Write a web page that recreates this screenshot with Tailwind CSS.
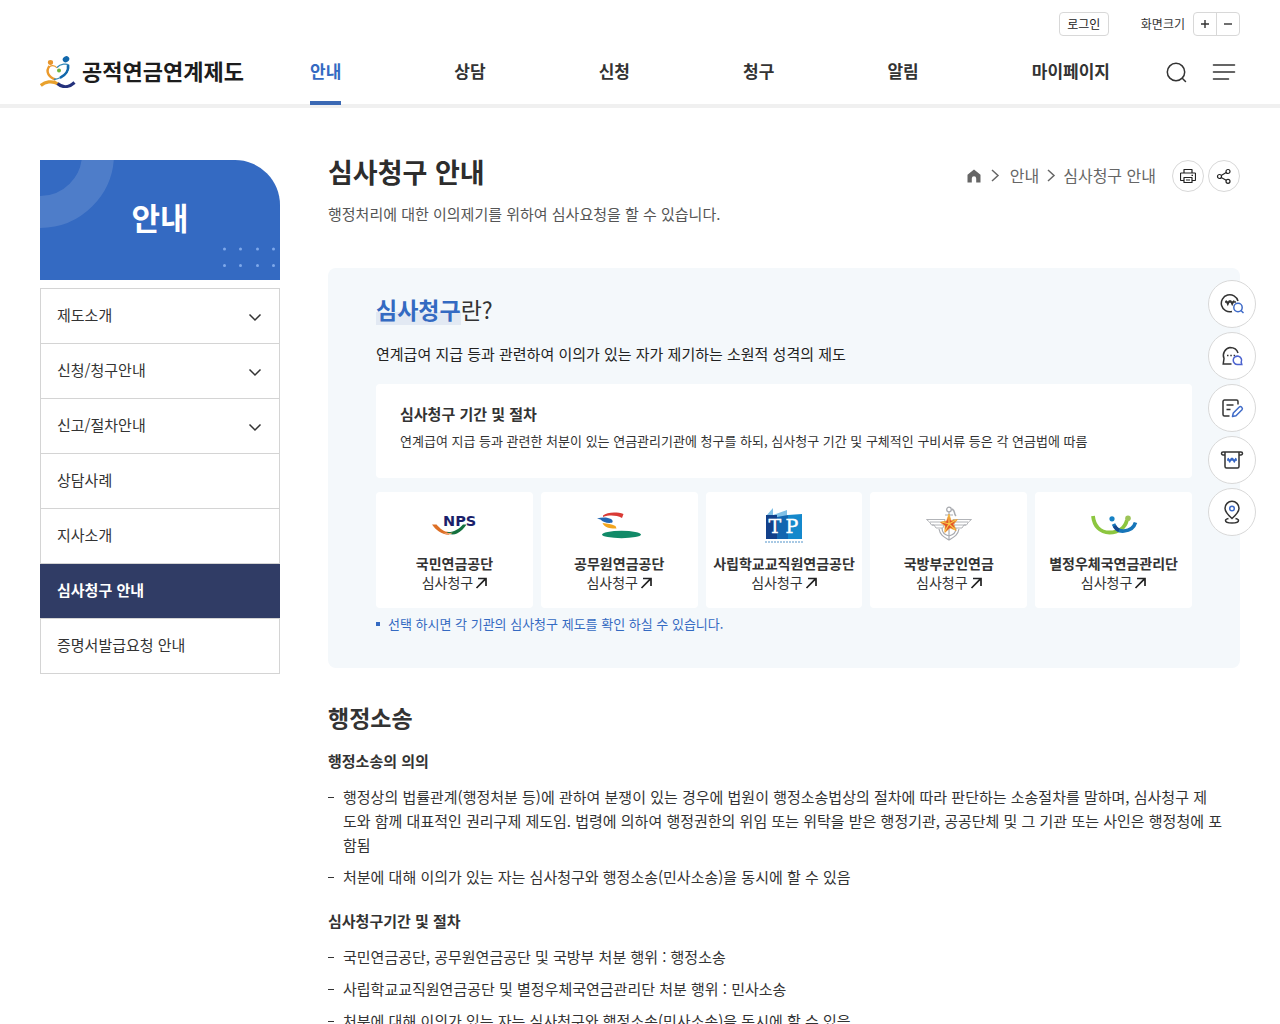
<!DOCTYPE html>
<html lang="ko">
<head>
    <meta charset="UTF-8">
    <meta name="viewport" content="width=device-width, initial-scale=1.0">
    <title>심사청구 안내 | 공적연금연계제도</title>
    <script src="https://cdn.jsdelivr.net/npm/@tailwindcss/browser@4"></script>
</head>
<body class="bg-white text-[#333] text-[15px] leading-6 font-['Noto_Sans_CJK_KR',sans-serif]">

    <!-- Header -->
    <header class="border-b-4 border-[#f0f0f0] px-10">
        <div class="flex justify-end items-center pt-3 text-xs">
            <button class="h-6 w-[50px] border border-[#d8d8d8] rounded text-[#222]">로그인</button>
            <span class="ml-8">화면크기</span>
            <div class="ml-2 flex h-6 w-[47px] border border-[#d8d8d8] rounded">
                <button aria-label="확대" class="flex-1 flex items-center justify-center border-r border-[#d8d8d8]">
                    <svg class="w-2 h-2" viewBox="0 0 8 8" stroke="#333" stroke-width="1.4"><path d="M0 4h8M4 0v8"/></svg>
                </button>
                <button aria-label="축소" class="flex-1 flex items-center justify-center">
                    <svg class="w-2 h-2" viewBox="0 0 8 8" stroke="#333" stroke-width="1.4"><path d="M0 4h8"/></svg>
                </button>
            </div>
        </div>
        <div class="flex h-17 items-stretch">
            <a href="#" class="flex items-center w-[270px] gap-1.5">
                <svg class="w-9 h-8 mt-1" viewBox="0 0 36 32" fill="none">
                    <ellipse cx="10.5" cy="6.5" rx="2.6" ry="2.4" fill="#e8952b"/>
                    <ellipse cx="26" cy="3.2" rx="3.4" ry="2.9" fill="#1268ac" transform="rotate(-30 26 3.2)"/>
                    <path d="M9.500 10C5.500 15 8 21 15.500 23.500" stroke="#eb9a2c" stroke-width="2.400"/>
                    <path d="M9 11c3-2 6-1.500 8 1" stroke="#eb9a2c" stroke-width="1.200"/>
                    <path d="M17 11.500c3.500-4 10-4 11.500-2.500 1 6-4 13-14.500 14.500" stroke="#3187b8" stroke-width="1.300"/>
                    <path d="M28 9c.8 5-2.200 10-8 12.800" stroke="#1268ac" stroke-width="2.600"/>
                    <circle cx="19" cy="14.500" r="2" fill="#6cb33f"/>
                    <path d="M.8 29.500C5 26 12 24 18 28" stroke="#e9a12c" stroke-width="3.200"/>
                    <path d="M17.500 27.500c5 4.500 11.500 4 17-1" stroke="#24317c" stroke-width="3.200"/>
                </svg>
                <span class="text-[22px] font-bold text-[#1c1c1c] whitespace-nowrap">공적연금연계제도</span>
            </a>
            <nav class="flex-1 flex justify-between text-[17px] font-bold">
                <a href="#" class="relative flex items-center pt-0.5 text-[#346ac2]">안내<span class="absolute inset-x-0 -bottom-px h-1 bg-[#3b69b4]"></span></a>
                <a href="#" class="flex items-center pt-0.5">상담</a>
                <a href="#" class="flex items-center pt-0.5">신청</a>
                <a href="#" class="flex items-center pt-0.5">청구</a>
                <a href="#" class="flex items-center pt-0.5">알림</a>
                <a href="#" class="flex items-center pt-0.5">마이페이지</a>
            </nav>
            <div class="flex items-center justify-end gap-6 w-[130px] pr-1 pt-1">
                <button aria-label="검색">
                    <svg class="w-6 h-6" viewBox="0 0 24 24" fill="none" stroke="#333" stroke-width="1.500" stroke-linecap="round"><circle cx="12" cy="12" r="8.700"/><path d="M18.500 18.500l3 3"/></svg>
                </button>
                <button aria-label="전체메뉴">
                    <svg class="w-6 h-6" viewBox="0 0 24 24" fill="none" stroke="#333" stroke-width="1.600" stroke-linecap="round"><path d="M1.500 5h21M1.500 12h21M1.500 19h15"/></svg>
                </button>
            </div>
        </div>
    </header>

    <div class="flex items-start gap-12 px-10 pt-[52px]">

        <!-- Side menu -->
        <aside class="w-60 shrink-0">
            <div class="relative h-30 bg-[#346ac2] rounded-tr-[45px] overflow-hidden flex items-center justify-center pb-1.5">
                <svg class="absolute inset-0 w-60 h-30" viewBox="0 0 240 120" fill="none">
                    <circle cx="0" cy="-6" r="58" stroke="#fff" stroke-opacity=".13" stroke-width="32"/>
                    <g fill="#7fa9ea">
                        <circle cx="184.500" cy="89" r="1.500"/><circle cx="200.500" cy="89" r="1.500"/><circle cx="217.500" cy="89" r="1.500"/><circle cx="233.500" cy="89" r="1.500"/>
                        <circle cx="184.500" cy="105.500" r="1.500"/><circle cx="200.500" cy="105.500" r="1.500"/><circle cx="217.500" cy="105.500" r="1.500"/><circle cx="233.500" cy="105.500" r="1.500"/>
                    </g>
                </svg>
                <h2 class="relative text-[31px] font-bold text-white">안내</h2>
            </div>
            <ul class="mt-2 border border-[#d4d4d4] divide-y divide-[#d4d4d4]">
                <li><a href="#" class="flex items-center justify-between h-[54px] px-4 pb-[3px]">제도소개
                    <svg class="w-4 h-4 mt-1" viewBox="0 0 16 16" fill="none" stroke="#333" stroke-width="1.500"><path d="M2.500 5.500L8 11l5.500-5.500"/></svg></a></li>
                <li><a href="#" class="flex items-center justify-between h-[54px] px-4 pb-[3px]">신청/청구안내
                    <svg class="w-4 h-4 mt-1" viewBox="0 0 16 16" fill="none" stroke="#333" stroke-width="1.500"><path d="M2.500 5.500L8 11l5.500-5.500"/></svg></a></li>
                <li><a href="#" class="flex items-center justify-between h-[54px] px-4 pb-[3px]">신고/절차안내
                    <svg class="w-4 h-4 mt-1" viewBox="0 0 16 16" fill="none" stroke="#333" stroke-width="1.500"><path d="M2.500 5.500L8 11l5.500-5.500"/></svg></a></li>
                <li><a href="#" class="flex items-center h-[54px] px-4 pb-[3px]">상담사례</a></li>
                <li><a href="#" class="flex items-center h-[54px] px-4 pb-[3px]">지사소개</a></li>
                <li class="-mx-px bg-[#303c65]"><a href="#" class="flex items-center h-[54px] px-[17px] pb-[3px] font-bold text-white">심사청구 안내</a></li>
                <li><a href="#" class="flex items-center h-[54px] px-4 pb-[3px]">증명서발급요청 안내</a></li>
            </ul>
        </aside>

        <!-- Content -->
        <main class="flex-1 min-w-0">
            <div class="flex items-start justify-between">
                <h1 class="text-[27px] leading-6 font-bold text-[#2d2d2d]">심사청구 안내</h1>
                <div class="flex items-center h-8 text-base text-[#666]">
                    <a href="#" aria-label="홈"><svg class="w-4 h-4" viewBox="0 0 16 16" fill="#666"><path d="M8 1.500l6.500 5.200V14.500h-4.300V10.500a2.200 2.200 0 0 0-4.400 0v4H1.500V6.700z"/></svg></a>
                    <svg class="w-3 h-4 mx-2" viewBox="0 0 12 16" fill="none" stroke="#666" stroke-width="1.500"><path d="M2 2l6 5.500L2 13"/></svg>
                    <a href="#" class="pb-[3px]">안내</a>
                    <svg class="w-3 h-4 mx-1.5" viewBox="0 0 12 16" fill="none" stroke="#666" stroke-width="1.500"><path d="M3 2l6 5.500L3 13"/></svg>
                    <a href="#" class="pb-[3px]">심사청구 안내</a>
                    <button aria-label="인쇄" class="ml-4 w-8 h-8 rounded-full border border-[#d8d8d8] flex items-center justify-center">
                        <svg class="w-4 h-4" viewBox="0 0 16 16" fill="none" stroke="#222" stroke-width="1.200" stroke-linejoin="round"><path d="M4 5V1.500h8V5M4 12.500H1.200a.7.7 0 0 1-.7-.7V5.700a.7.7 0 0 1 .7-.7h13.600a.7.7 0 0 1 .7.7v6.100a.7.7 0 0 1-.7.7H12M4 9.500h8v5H4zM6 12h4"/><path d="M11.500 7.300h1.500"/></svg>
                    </button>
                    <button aria-label="공유" class="ml-1 w-8 h-8 rounded-full border border-[#d8d8d8] flex items-center justify-center">
                        <svg class="w-4 h-4" viewBox="0 0 16 16" fill="none" stroke="#222" stroke-width="1.200"><circle cx="3.500" cy="8.500" r="2"/><circle cx="12" cy="3.500" r="2"/><circle cx="12" cy="13.300" r="2"/><path d="M5.200 7.400l5-2.900M5.200 9.500l5 2.800"/></svg>
                    </button>
                </div>
            </div>
            <p class="mt-[10px] text-[#555]">행정처리에 대한 이의제기를 위하여 심사요청을 할 수 있습니다.</p>

            <section class="mt-[42px] rounded-lg bg-[#f4f8fb] px-12 pt-[25px] pb-[34px]">
                <h2 class="text-[23px] leading-8"><strong class="inline-block bg-linear-to-t from-[#e2e9f3] from-40% to-transparent to-40% text-[#346ac2]">심사청구</strong>란?</h2>
                <p class="mt-[17px] text-[#222]">연계급여 지급 등과 관련하여 이의가 있는 자가 제기하는 소원적 성격의 제도</p>
                <div class="mt-[18px] rounded bg-white px-6 pt-[18px] pb-[27px]">
                    <h3 class="font-bold">심사청구 기간 및 절차</h3>
                    <p class="mt-[5px] text-[13px] leading-5">연계급여 지급 등과 관련한 처분이 있는 연금관리기관에 청구를 하되, 심사청구 기간 및 구체적인 구비서류 등은 각 연금법에 따름</p>
                </div>
                <div class="mt-[14px] grid grid-cols-5 gap-2 text-center text-sm leading-[19px] whitespace-nowrap">
                    <a href="#" class="flex flex-col items-center rounded bg-white pt-3 pb-4">
                        <svg class="w-12 h-10" viewBox="0 0 48 40" fill="none">
                            <path d="M2 20.500h4.500C10 24.500 14 28 19 28v2.800C11 30.500 6 26 2 20.500z" fill="#dd6f26"/>
                            <path d="M36.500 20.500H33C29 25 24 28.500 17 28c2 3 7 3 10 1.500 4-2 7-5 9.500-9z" fill="#14713f"/>
                            <path d="M13.500 28.500c3 .8 6 .6 9 0-2 2.800-6 2.800-9 0z" fill="#f0a06c"/>
                            <text x="13" y="22" font-family="DejaVu Sans" font-size="14.500" font-weight="700" fill="#1b1f6b">NPS</text>
                        </svg>
                        <strong class="mt-[10px]">국민연금공단</strong>
                        <span class="flex items-center gap-0.5">심사청구 <svg class="w-3 h-3" viewBox="0 0 12 12" fill="none" stroke="#222" stroke-width="1.700"><path d="M1.500 11L10.500 1.800M3 1.500h8V9"/></svg></span>
                    </a>
                    <a href="#" class="flex flex-col items-center rounded bg-white pt-3 pb-4">
                        <svg class="w-12 h-10" viewBox="0 0 48 40" fill="none">
                            <path d="M8 11.500C12 8 22 7.800 28.500 10l-1.500 4C21 11 14 11 8 13z" fill="#d93a35"/>
                            <path d="M2 14.500c5-1.700 11-1.400 14 .5 2 1.300 2 3 1 3.800-5 .6-9-.5-11.500-3.300z" fill="#2266b3"/>
                            <path d="M7.500 19c5 .8 9 1 13 3l1 2.500c-5 .3-12-.5-14-5.500z" fill="#f2a51e"/>
                            <ellipse cx="26.500" cy="30.500" rx="19.500" ry="3.700" fill="#118a68"/>
                        </svg>
                        <strong class="mt-[10px]">공무원연금공단</strong>
                        <span class="flex items-center gap-0.5">심사청구 <svg class="w-3 h-3" viewBox="0 0 12 12" fill="none" stroke="#222" stroke-width="1.700"><path d="M1.500 11L10.500 1.800M3 1.500h8V9"/></svg></span>
                    </a>
                    <a href="#" class="flex flex-col items-center rounded bg-white pt-3 pb-4">
                        <svg class="w-12 h-10" viewBox="0 0 48 40" fill="none">
                            <path d="M6 12l7-8v7l14-5v6l15-1v24H6z" fill="#7fc0e6"/>
                            <path d="M6 11h11v24H6z" fill="#12408a"/>
                            <path d="M17 13l11-2v24H17z" fill="#1266b0"/>
                            <path d="M28 11l14-1v25H28z" fill="#1488cc"/>
                            <text x="8.500" y="28.500" font-family="DejaVu Serif" font-size="19" fill="#fff" stroke="#fff" stroke-width=".400">T</text>
                            <text x="25.500" y="28.500" font-family="DejaVu Serif" font-size="19" fill="#fff" stroke="#fff" stroke-width=".400">P</text>
                            <path d="M5 38h38" stroke="#8cb8dc" stroke-width="1.500" stroke-dasharray="2 1"/>
                        </svg>
                        <strong class="mt-[10px]">사립학교교직원연금공단</strong>
                        <span class="flex items-center gap-0.5">심사청구 <svg class="w-3 h-3" viewBox="0 0 12 12" fill="none" stroke="#222" stroke-width="1.700"><path d="M1.500 11L10.500 1.800M3 1.500h8V9"/></svg></span>
                    </a>
                    <a href="#" class="flex flex-col items-center rounded bg-white pt-3 pb-4">
                        <svg class="w-12 h-10" viewBox="0 0 48 40" fill="none" stroke="#a9abb0">
                            <circle cx="24" cy="5.500" r="2.300" stroke-width="1.300"/>
                            <path d="M20 11h8M24 8v28M14 25c1 6 5 8 10 11 5-3 9-5 10-11M17 24c0 5 3 7 7 8 4-1 7-3 7-8" stroke-width="1.200"/>
                            <path d="M27 5c4 2 1 4 4 7" stroke-width="1.500"/>
                            <path d="M1.500 15.500H20l-2 8.500h-7l-2-3H6.500l-2-3zM46.500 15.500H28l2 8.500h7l2-3h2.500l2-3zM5 18h14M7 21h11M43 18H29M41 21H30" fill="#fff" stroke-width=".900"/>
                            <path d="M24 10l2 6.500 6.500-1-4 4.800 2.700 6.200-6.200-2.500-5.200 4.500.2-6.700-4.800-3.500 6.300-1.300z" fill="#e2542c" stroke="#f3b33c" stroke-width=".700"/>
                            <path d="M24 11v9l7-4M24 20l6 5.500M24 20l-4 7M24 20l-7-2" stroke="#f8cb45" stroke-width="1.200"/>
                        </svg>
                        <strong class="mt-[10px]">국방부군인연금</strong>
                        <span class="flex items-center gap-0.5">심사청구 <svg class="w-3 h-3" viewBox="0 0 12 12" fill="none" stroke="#222" stroke-width="1.700"><path d="M1.500 11L10.500 1.800M3 1.500h8V9"/></svg></span>
                    </a>
                    <a href="#" class="flex flex-col items-center rounded bg-white pt-3 pb-4">
                        <svg class="w-12 h-10" viewBox="0 0 48 40" fill="none">
                            <path d="M3 12c1 10 7 16.500 16.500 16.500 9 0 15.500-4.500 17.500-12.500" stroke="#8cc63f" stroke-width="3.800"/>
                            <path d="M23.500 20c2 5 6 7.500 10.500 7 6-.5 10-3.500 11.500-8.500" stroke="#1675b9" stroke-width="3.600"/>
                            <path d="M24.500 22c1 2 2.500 3.500 4.500 4.300" stroke="#16488f" stroke-width="3.600"/>
                            <circle cx="22" cy="14.800" r="2.600" fill="#1681c4"/>
                            <circle cx="38" cy="14.300" r="2.800" fill="#9dc458"/>
                        </svg>
                        <strong class="mt-[10px]">별정우체국연금관리단</strong>
                        <span class="flex items-center gap-0.5">심사청구 <svg class="w-3 h-3" viewBox="0 0 12 12" fill="none" stroke="#222" stroke-width="1.700"><path d="M1.500 11L10.500 1.800M3 1.500h8V9"/></svg></span>
                    </a>
                </div>
                <p class="mt-1.5 flex items-center gap-2 text-[13px] leading-5 text-[#346ac2]"><span class="w-1 h-1 bg-[#346ac2]"></span>선택 하시면 각 기관의 심사청구 제도를 확인 하실 수 있습니다.</p>
            </section>

            <h2 class="mt-[33px] text-[23px] leading-8 font-bold">행정소송</h2>
            <h3 class="mt-4 font-bold">행정소송의 의의</h3>
            <ul class="mt-3 space-y-2">
                <li class="flex gap-[9px]"><span class="mt-3 h-px w-1.5 shrink-0 bg-[#333]"></span><p>행정상의 법률관계(행정처분 등)에 관하여 분쟁이 있는 경우에 법원이 행정소송법상의 절차에 따라 판단하는 소송절차를 말하며, 심사청구 제<br>도와 함께 대표적인 권리구제 제도임. 법령에 의하여 행정권한의 위임 또는 위탁을 받은 행정기관, 공공단체 및 그 기관 또는 사인은 행정청에 포<br>함됨</p></li>
                <li class="flex gap-[9px]"><span class="mt-3 h-px w-1.5 shrink-0 bg-[#333]"></span><p>처분에 대해 이의가 있는 자는 심사청구와 행정소송(민사소송)을 동시에 할 수 있음</p></li>
            </ul>
            <h3 class="mt-5 font-bold">심사청구기간 및 절차</h3>
            <ul class="mt-3 space-y-2">
                <li class="flex gap-[9px]"><span class="mt-3 h-px w-1.5 shrink-0 bg-[#333]"></span><p>국민연금공단, 공무원연금공단 및 국방부 처분 행위 : 행정소송</p></li>
                <li class="flex gap-[9px]"><span class="mt-3 h-px w-1.5 shrink-0 bg-[#333]"></span><p>사립학교교직원연금공단 및 별정우체국연금관리단 처분 행위 : 민사소송</p></li>
                <li class="flex gap-[9px]"><span class="mt-3 h-px w-1.5 shrink-0 bg-[#333]"></span><p>처분에 대해 이의가 있는 자는 심사청구와 행정소송(민사소송)을 동시에 할 수 있음</p></li>
            </ul>
        </main>
    </div>

    <!-- Quick menu -->
    <div class="fixed top-[280px] right-6 flex flex-col gap-1">
        <a href="#" aria-label="연금조회" class="w-12 h-12 rounded-full border border-[#d8d8d8] bg-white flex items-center justify-center">
            <svg class="w-6 h-6" viewBox="0 0 24 24" fill="none" stroke="#333" stroke-width="1.500"><path d="M12 19.500A8.500 8.500 0 1 1 18 9"/><path d="M5 10h11M6 8.500l1.800 4 1.500-3.500h1.400l1.500 3.500L14 8.500"/><g stroke="#3f6bc8"><circle cx="18" cy="15.500" r="4.200"/><path d="M21 18.500l2.500 2.500"/></g></svg>
        </a>
        <a href="#" aria-label="상담조회" class="w-12 h-12 rounded-full border border-[#d8d8d8] bg-white flex items-center justify-center">
            <svg class="w-6 h-6" viewBox="0 0 24 24" fill="none" stroke="#333" stroke-width="1.500"><path d="M11.500 20H3.200l.8-5.500A8 8 0 0 1 10 3.500c4 0 7 2 8 5.500"/><path d="M7 11.500h8.500" stroke-dasharray="1.500 1.800"/><path d="M21.200 18.200l.6 2.300H18a4.200 4.200 0 1 1 3.200-2.300z" stroke="#4c63cf"/></svg>
        </a>
        <a href="#" aria-label="신청서 작성" class="w-12 h-12 rounded-full border border-[#d8d8d8] bg-white flex items-center justify-center">
            <svg class="w-6 h-6" viewBox="0 0 24 24" fill="none" stroke="#333" stroke-width="1.500" stroke-linejoin="round"><path d="M9.500 20H4.500a1.500 1.500 0 0 1-1.500-1.500v-13A1.500 1.500 0 0 1 4.500 4h12A1.500 1.500 0 0 1 18 5.500V8.500M6.500 9h7M6.500 13.500h4"/><path d="M12.500 20.500l.8-3.500 6-6c1.500-1.300 4 1 2.700 2.700l-6 6z" stroke="#3f6bc8"/></svg>
        </a>
        <a href="#" aria-label="연금청구" class="w-12 h-12 rounded-full border border-[#d8d8d8] bg-white flex items-center justify-center">
            <svg class="w-6 h-6" viewBox="0 0 24 24" fill="none" stroke="#333" stroke-width="1.500" stroke-linejoin="round"><path d="M5 7H3a1 1 0 0 1 0-3h18a1 1 0 0 1 0 3H19M5 4.500v14A1.500 1.500 0 0 0 6.500 20h11a1.500 1.500 0 0 0 1.500-1.500v-14"/><path d="M7 12h10M8 10l1.700 4L11.300 10.500h1.400L14.300 14 16 10" stroke="#3565c4"/></svg>
        </a>
        <a href="#" aria-label="지사찾기" class="w-12 h-12 rounded-full border border-[#d8d8d8] bg-white flex items-center justify-center">
            <svg class="w-6 h-6" viewBox="0 0 24 24" fill="none" stroke="#333" stroke-width="1.500"><path d="M12 18.500c-4-3.500-7-6.500-7-10.200a7 7 0 0 1 14 0c0 3.700-3 6.700-7 10.200z"/><path d="M8.500 18.500c-2 .5-3 1.200-3 2 0 1.500 3 2.500 6.500 2.500s6.500-1 6.500-2.500c0-.8-1-1.500-3-2"/><circle cx="12" cy="8.500" r="2.300" stroke="#3f6bc8"/></svg>
        </a>
    </div>

</body>
</html>
